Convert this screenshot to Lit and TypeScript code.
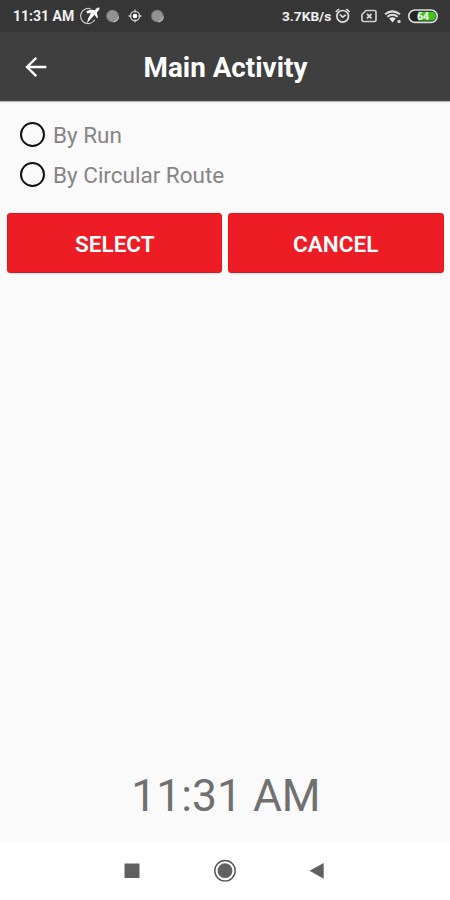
import { LitElement, html, css, svg } from "lit";
import { customElement } from "lit/decorators.js";

@customElement("status-bar")
class StatusBar extends LitElement {
  static styles = css`
    :host {
      display: flex;
      align-items: center;
      height: 32px;
      padding-left: 13px;
      box-sizing: border-box;
      background: #363636;
      color: #f0f0f0;
      font: 700 14px/32px Roboto, sans-serif;
    }
    svg { display: block; flex: none; }
    .time { width: 66px; white-space: nowrap; }
    .notes { width: 203px; }
    .speed { width: 52px; white-space: nowrap; font-size: 13.7px; }
    .system { width: 116px; }
  `;

  render() {
    return html`
      <span class="time">11:31 AM</span>
      <svg class="notes" width="203" height="32" viewBox="79 0 203 32">
        <path d="M90.5 8.8A7.6 7.6 0 1 0 94.8 19.8" fill="none" stroke="#c9c9c9" stroke-width="1.2" />
        <path d="M86.5 11.2L90.8 9.4L94.6 10.2L97.2 7.8L99.6 7.6L99.4 9.6L96.8 12.4L98 18.2L96.4 17.4L94.6 14.8L92.4 17.2L86.8 23.2L88.6 17.4L91 13.2L87 13.2Z" fill="#fff" />
        ${[112.5, 157.3].map(
          (x) => svg`<circle cx=${x} cy="16" r="5.9" fill="#929292" stroke="#747474" />
            <path d="M${x + 1} 21.8A6 6 0 0 0 ${x + 6} 16.5" fill="none" stroke="#c4c4c4" stroke-width="1.2" />`,
        )}
        <circle cx="135" cy="16" r="4.6" fill="none" stroke="#d0d0d0" stroke-width="1.3" />
        <circle cx="135" cy="16" r="2.3" fill="#fff" />
        <path d="M135 9.5v3M135 19.5v3M128.5 16h3M138.5 16h3" stroke="#d0d0d0" stroke-width="1.3" />
      </svg>
      <span class="speed">3.7KB/s</span>
      <svg class="system" width="116" height="32" viewBox="334 0 116 32">
        <g fill="none" stroke="#dedede" stroke-width="1.7">
          <circle cx="342.7" cy="16.3" r="5.8" />
          <path d="M335.8 12L339 9M349.6 12L346.4 9M339.8 14.5L342.7 17.2L345.8 14.8" />
          <path d="M366 10.5H374.5Q376 10.5 376 12V20Q376 21.5 374.5 21.5H363.5Q362 21.5 362 20V14.5Z" stroke="#cfcfcf" />
          <path d="M367 13.8L371.5 18.4M371.5 13.8L367 18.4" />
          <path d="M385 14.3Q392.5 8.4 400 14.3M387.3 16.8Q392.5 12.6 397.7 16.8" stroke-width="2" />
        </g>
        <path d="M389.2 18.4Q392.5 16.2 395.7 18.4L392.5 22.4Z" fill="#e8e8e8" />
        <path d="M397.5 20h3v3h-3z" fill="#ccc" />
        <rect x="408.8" y="10" width="28.4" height="12.4" rx="6.2" fill="#242424" stroke="#dcdcdc" stroke-width="1.6" />
        <path d="M418 11.8H431.5A4.4 4.4 0 0 1 431.5 20.6H418Z" fill="#42c41e" />
        <text x="423" y="20" text-anchor="middle" font-size="10.5" fill="#fff">64</text>
      </svg>
    `;
  }
}

@customElement("app-root")
class AppRoot extends LitElement {
  static styles = css`
    :host {
      display: flex;
      flex-direction: column;
      height: 900px;
      width: 450px;
      overflow: hidden;
      background: #fafafa;
      font-family: Roboto, sans-serif;
    }
    svg { display: block; flex: none; }
    .toolbar {
      display: grid;
      grid-template-columns: 60px 1fr 60px;
      align-items: center;
      height: 69px;
      box-sizing: border-box;
      background: #3f3f3f;
      border-bottom: 1px solid #484848;
      box-shadow: 0 1px 1px #b5b5b5;
      color: #fff;
    }
    .back { margin: 2px 0 0 24px; }
    .title {
      margin: 3px 0 0 1px;
      text-align: center;
      font-size: 27.8px;
      font-weight: 700;
      line-height: 36px;
      white-space: nowrap;
    }
    .options { padding: 14px 20px 0; }
    .option {
      display: flex;
      align-items: center;
      gap: 8px;
      height: 40px;
      color: #858585;
      font-size: 22.5px;
    }
    .radio {
      width: 25px;
      height: 25px;
      margin-bottom: 2px;
      box-sizing: border-box;
      border: 2px solid #111;
      border-radius: 50%;
    }
    .actions {
      display: grid;
      grid-template-columns: 215px 216px;
      gap: 5.4px;
      padding: 18px 6px 0 7.3px;
    }
    .button {
      height: 60px;
      box-sizing: border-box;
      padding: 1px 0 0;
      border: 1px solid #e2141d;
      border-radius: 3px;
      background: #ee1c25;
      box-shadow: 0 1px 2px #0001;
      color: #fff;
      font: 600 22.5px Roboto, sans-serif;
    }
    .clock {
      margin-top: auto;
      padding-left: 2px;
      height: 91px;
      line-height: 91px;
      font-size: 44.4px;
      text-align: center;
      color: #707070;
    }
    .nav { height: 58px; background: #fff; }
  `;

  render() {
    return html`
      <status-bar></status-bar>
      <header class="toolbar">
        <svg class="back" width="24" height="24" viewBox="24 55 24 24">
          <path d="M46.3 67H27.5M36.3 57.8L27 67L36.3 76.2" fill="none" stroke="#fff" stroke-width="2.4" />
        </svg>
        <h1 class="title">Main Activity</h1>
      </header>
      <div class="options">
        ${["By Run", "By Circular Route"].map(
          (label) => html`<div class="option"><span class="radio"></span><span>${label}</span></div>`,
        )}
      </div>
      <div class="actions">
        <button class="button">SELECT</button>
        <button class="button">CANCEL</button>
      </div>
      <div class="clock">11:31 AM</div>
      <svg class="nav" width="450" height="58" viewBox="0 842 450 58">
        <path d="M124.5 863.5H139.5V878H124.5Z" fill="#606060" />
        <circle cx="225" cy="870.7" r="10.2" fill="none" stroke="#555" stroke-width="1.4" />
        <circle cx="225" cy="870.7" r="7.4" fill="#606060" />
        <path d="M309.5 870.7L323.7 863V878.8Z" fill="#606060" />
      </svg>
    `;
  }
}
